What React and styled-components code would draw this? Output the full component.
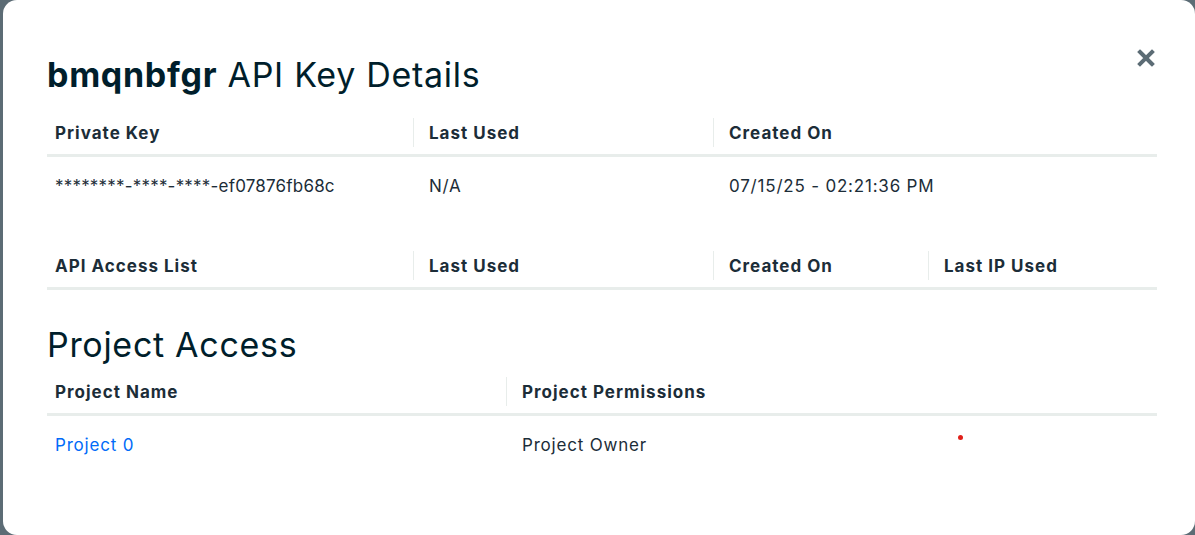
import React from "react";
import styled, { createGlobalStyle } from "styled-components";

const GlobalStyle = createGlobalStyle`
  html, body {
    margin: 0;
    padding: 0;
    height: 100%;
    background: #5c6c75;
    font-family: Inter, "Noto Sans", sans-serif;
    color: #1c2d38;
    overflow: hidden;
  }
  #root {
    height: 100%;
  }
`;

const Backdrop = styled.div`
  height: 100%;
  display: flex;
  padding-left: 3px;
  box-sizing: border-box;
`;

const Modal = styled.div`
  position: relative;
  flex: 1;
  background: #ffffff;
  border-radius: 14px;
  padding: 50px 38px 0 44px;
`;

const CloseButton = styled.button`
  position: absolute;
  top: 47px;
  right: 38px;
  width: 22px;
  height: 22px;
  padding: 0;
  border: none;
  background: none;
  cursor: pointer;
  display: flex;
  align-items: center;
  justify-content: center;
`;

const Title = styled.h2`
  margin: 0 0 12px;
  font-size: 34px;
  line-height: 50px;
  font-weight: 400;
  color: #001e2b;
  letter-spacing: 0.7px;
  b {
    font-weight: 700;
  }
`;

const SectionTitle = styled(Title)`
  margin: 0 0 1px;
`;

const Table = styled.div`
  display: grid;
  grid-template-columns: ${(p) => p.$cols};
  margin-bottom: ${(p) => p.$gap || 0}px;
`;

const HeadCell = styled.div`
  position: relative;
  height: 42px;
  display: flex;
  align-items: center;
  padding: 0 8px 0 ${(p) => (p.$first ? 8 : 16)}px;
  font-size: 17px;
  font-weight: 700;
  letter-spacing: 1px;
  color: #1c2d38;
  border-bottom: 3px solid #e8edeb;
  &::before {
    content: "";
    display: ${(p) => (p.$first ? "none" : "block")};
    position: absolute;
    left: 0;
    top: 6px;
    bottom: 7px;
    width: 1px;
    background: #e8edeb;
  }
`;

const Cell = styled.div`
  height: 58px;
  display: flex;
  align-items: center;
  padding: 0 8px 0 ${(p) => (p.$first ? 8 : 16)}px;
  font-size: 17px;
  letter-spacing: ${(p) => (p.$mono ? 0.2 : 0.8)}px;
  color: ${(p) => (p.$link ? "#016bf8" : "#1c2d38")};
`;

const Dot = styled.span`
  position: absolute;
  left: 955px;
  top: 435px;
  width: 5px;
  height: 5px;
  border-radius: 50%;
  background: #e0201a;
`;

export default function App() {
  return (
    <Backdrop>
      <GlobalStyle />
      <Modal>
        <CloseButton aria-label="Close">
          <svg width="18" height="18" viewBox="0 0 18 18">
            <path
              d="M3 3 L15 15 M15 3 L3 15"
              stroke="#5c6c75"
              strokeWidth="4"
              strokeLinecap="square"
            />
          </svg>
        </CloseButton>
        <Title>
          <b>bmqnbfgr</b> API Key Details
        </Title>
        <Table $cols="366px 300px 1fr" $gap={30}>
          <HeadCell $first>Private Key</HeadCell>
          <HeadCell>Last Used</HeadCell>
          <HeadCell>Created On</HeadCell>
          <Cell $first $mono>********-****-****-ef07876fb68c</Cell>
          <Cell>N/A</Cell>
          <Cell>07/15/25 - 02:21:36 PM</Cell>
        </Table>
        <Table $cols="366px 300px 215px 1fr" $gap={30}>
          <HeadCell $first>API Access List</HeadCell>
          <HeadCell>Last Used</HeadCell>
          <HeadCell>Created On</HeadCell>
          <HeadCell>Last IP Used</HeadCell>
        </Table>
        <SectionTitle>Project Access</SectionTitle>
        <Table $cols="459px 1fr">
          <HeadCell $first>Project Name</HeadCell>
          <HeadCell>Project Permissions</HeadCell>
          <Cell $first $link>Project 0</Cell>
          <Cell>Project Owner</Cell>
        </Table>
        <Dot />
      </Modal>
    </Backdrop>
  );
}
